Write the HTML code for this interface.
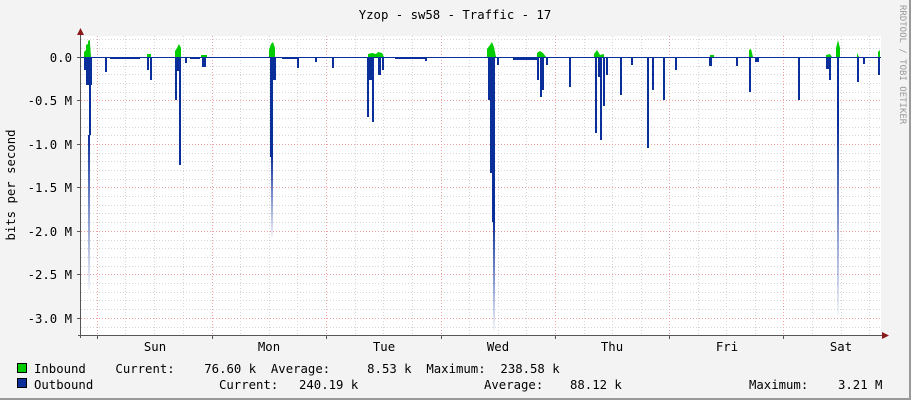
<!DOCTYPE html>
<html><head><meta charset="utf-8"><style>
html,body{margin:0;padding:0;background:#f3f3f3}
svg{display:block}
text{font-family:"DejaVu Sans Mono","Liberation Mono",monospace;font-size:12.3px;fill:#000}
</style></head><body>
<svg width="911" height="400" xmlns="http://www.w3.org/2000/svg">
<defs>
<linearGradient id="fd" x1="0" y1="0" x2="0" y2="1"><stop offset="0" stop-color="#0b2f9a"/><stop offset="1" stop-color="#0b2f9a" stop-opacity="0.05"/></linearGradient>
</defs>
<rect x="0" y="0" width="911" height="400" fill="#f3f3f3"/>
<line x1="0" y1="399" x2="911" y2="399" stroke="#999" stroke-width="2"/>
<line x1="910" y1="0" x2="910" y2="400" stroke="#999" stroke-width="2"/>
<rect x="81" y="36" width="800" height="299" fill="#fff"/>
<g stroke="#d6d6d6" stroke-dasharray="1,2" stroke-width="1">
<path d="M81 39.5H881M81 48.5H881M81 66.5H881M81 74.5H881M81 83.5H881M81 92.5H881M81 109.5H881M81 118.5H881M81 127.5H881M81 135.5H881M81 153.5H881M81 161.5H881M81 170.5H881M81 179.5H881M81 196.5H881M81 205.5H881M81 213.5H881M81 222.5H881M81 240.5H881M81 248.5H881M81 257.5H881M81 266.5H881M81 283.5H881M81 292.5H881M81 300.5H881M81 309.5H881M81 327.5H881"/>
<path d="M125.5 36V335M154.5 36V335M183.5 36V335M240.5 36V335M269.5 36V335M297.5 36V335M355.5 36V335M383.5 36V335M412.5 36V335M469.5 36V335M498.5 36V335M526.5 36V335M584.5 36V335M612.5 36V335M641.5 36V335M698.5 36V335M726.5 36V335M755.5 36V335M812.5 36V335M841.5 36V335M869.5 36V335"/>
</g>
<g stroke="#f0a0a0" stroke-dasharray="1,2" stroke-width="1">
<path d="M81 100.5H881M81 144.5H881M81 187.5H881M81 231.5H881M81 274.5H881M81 318.5H881"/>
<path d="M97.5 36V335M212.5 36V335M326.5 36V335M441.5 36V335M555.5 36V335M669.5 36V335M783.5 36V335"/>
</g>
<g fill="#00cc00">
<path d="M84 57V52L86 50V45L88 44V41L90 40V43L91 57Z"/>
<rect x="147" y="54" width="4" height="3"/>
<path d="M175 57V51L177 48L179 44L181 48V57Z"/>
<rect x="201" y="55" width="6" height="2"/>
<path d="M269 57V50L271 44L273 42L275 48V57Z"/>
<path d="M368 57V54L372 53L376 54L378 52L382 53L384 57Z"/>
<path d="M487 57V49L490 45L492 42L494 47L496 57Z"/>
<path d="M537 57V53L540 51L543 53L546 57Z"/>
<path d="M594 57V54L597 50L600 55L604 54V57Z"/>
<rect x="710" y="55" width="4" height="2"/>
<path d="M749 57V50L751 49L753 57Z"/>
<path d="M826 57V55L830 54L832 57Z"/>
<path d="M836 57V48L838 40L840 48V57Z"/>
<path d="M857 57V53L859 57Z"/>
<path d="M878 57V52L880 50V57Z"/>
</g>
<g fill="#0b2f9a">
<path d="M84 57H92V85L91 85V135H89V85H86V70H84Z"/>
<rect x="105" y="57" width="2" height="15"/>
<rect x="110" y="57" width="30" height="2"/>
<rect x="147" y="57" width="2" height="13"/>
<rect x="150" y="57" width="2" height="23"/>
<rect x="175" y="57" width="2" height="43"/>
<rect x="177" y="57" width="2" height="14"/>
<rect x="179" y="57" width="2" height="108"/>
<rect x="185" y="57" width="2" height="6"/>
<rect x="190" y="57" width="10" height="2"/>
<rect x="202" y="57" width="4" height="10"/>
<rect x="230" y="57" width="20" height="1"/>
<rect x="270" y="57" width="3" height="100"/>
<rect x="273" y="57" width="3" height="23"/>
<rect x="282" y="57" width="15" height="2"/>
<rect x="297" y="57" width="2" height="11"/>
<rect x="315" y="57" width="2" height="5"/>
<rect x="332" y="57" width="2" height="11"/>
<rect x="367" y="57" width="2" height="60"/>
<rect x="369" y="57" width="3" height="23"/>
<rect x="372" y="57" width="2" height="65"/>
<rect x="378" y="57" width="3" height="18"/>
<rect x="382" y="57" width="2" height="13"/>
<rect x="395" y="57" width="30" height="2"/>
<rect x="425" y="57" width="2" height="4"/>
<rect x="488" y="57" width="2" height="43"/>
<rect x="490" y="57" width="2" height="116"/>
<rect x="492" y="57" width="3" height="165"/>
<rect x="497" y="57" width="2" height="8"/>
<rect x="513" y="57" width="25" height="3"/>
<rect x="537" y="57" width="2" height="23"/>
<rect x="540" y="57" width="2" height="40"/>
<rect x="542" y="57" width="2" height="33"/>
<rect x="546" y="57" width="2" height="8"/>
<rect x="569" y="57" width="2" height="30"/>
<rect x="595" y="57" width="2" height="76"/>
<rect x="598" y="57" width="2" height="20"/>
<rect x="600" y="57" width="2" height="83"/>
<rect x="603" y="57" width="2" height="49"/>
<rect x="606" y="57" width="2" height="18"/>
<rect x="620" y="57" width="2" height="38"/>
<rect x="631" y="57" width="2" height="8"/>
<rect x="647" y="57" width="2" height="91"/>
<rect x="652" y="57" width="2" height="33"/>
<rect x="663" y="57" width="2" height="43"/>
<rect x="675" y="57" width="2" height="13"/>
<rect x="709" y="57" width="3" height="9"/>
<rect x="736" y="57" width="2" height="9"/>
<rect x="749" y="57" width="2" height="35"/>
<rect x="755" y="57" width="4" height="5"/>
<rect x="798" y="57" width="2" height="43"/>
<rect x="826" y="57" width="3" height="12"/>
<rect x="829" y="57" width="2" height="23"/>
<rect x="837" y="57" width="2" height="68"/>
<rect x="857" y="57" width="2" height="25"/>
<rect x="863" y="57" width="2" height="7"/>
<rect x="878" y="57" width="2" height="18"/>
</g>
<g fill="url(#fd)">
<rect x="88" y="135" width="2" height="155"/>
<rect x="271" y="157" width="2" height="80"/>
<rect x="493" y="222" width="2" height="108"/>
<rect x="837" y="125" width="2" height="190"/>
</g>
<line x1="81" y1="57.5" x2="881" y2="57.5" stroke="#0b2f9a" stroke-width="1"/>
<line x1="80.5" y1="32" x2="80.5" y2="338" stroke="#555"/>
<line x1="78" y1="335.5" x2="884" y2="335.5" stroke="#555"/>
<path d="M77 35L80.5 28L84 35Z" fill="#8b1a1a"/>
<path d="M882 332L889 335.5L882 339Z" fill="#8b1a1a"/>
<g stroke="#555"><path d="M77 57.5H81M77 100.5H81M77 144.5H81M77 187.5H81M77 231.5H81M77 274.5H81M77 318.5H81M97.5 335V339M212.5 335V339M326.5 335V339M441.5 335V339M555.5 335V339M669.5 335V339M783.5 335V339"/></g>
<text x="455" y="19" text-anchor="middle">Yzop - sw58 - Traffic - 17</text>
<g text-anchor="end">
<text x="72" y="62">0.0</text>
<text x="72" y="105">-0.5 M</text>
<text x="72" y="149">-1.0 M</text>
<text x="72" y="192">-1.5 M</text>
<text x="72" y="236">-2.0 M</text>
<text x="72" y="279">-2.5 M</text>
<text x="72" y="323">-3.0 M</text>
</g>
<text transform="translate(15,185) rotate(-90)" text-anchor="middle">bits per second</text>
<text transform="translate(900,5) rotate(90)" style="font-size:9px;fill:#999">RRDTOOL / TOBI OETIKER</text>
<g text-anchor="middle">
<text x="155" y="351">Sun</text>
<text x="269" y="351">Mon</text>
<text x="384" y="351">Tue</text>
<text x="498" y="351">Wed</text>
<text x="612" y="351">Thu</text>
<text x="727" y="351">Fri</text>
<text x="841" y="351">Sat</text>
</g>
<rect x="17.5" y="363.5" width="9" height="9" fill="#00cc00" stroke="#000"/>
<rect x="17.5" y="378.5" width="9" height="9" fill="#0b2f9a" stroke="#000"/>
<text x="34" y="373" xml:space="preserve">Inbound    Current:    76.60 k  Average:     8.53 k  Maximum:  238.58 k</text>
<text x="34" y="389">Outbound</text>
<text x="219" y="389">Current:</text>
<text x="299" y="389">240.19 k</text>
<text x="484" y="389">Average:</text>
<text x="570" y="389">88.12 k</text>
<text x="749" y="389">Maximum:</text>
<text x="838" y="389">3.21 M</text>
</svg>
</body></html>
